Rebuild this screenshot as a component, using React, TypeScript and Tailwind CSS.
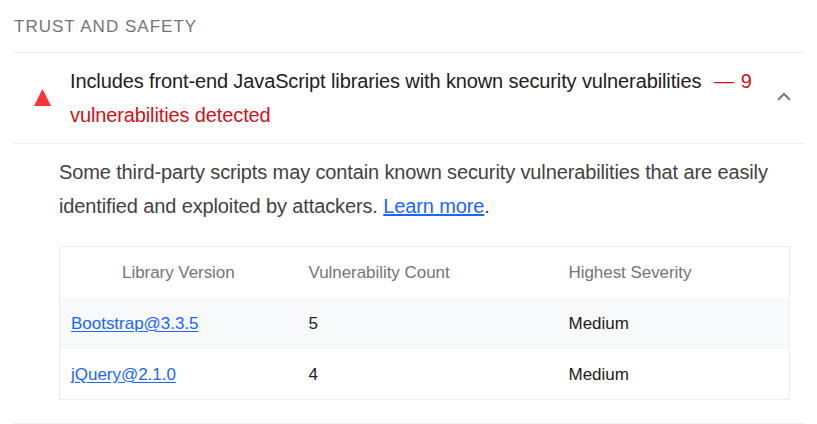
export default function App() {
  const rows = [
    ["Bootstrap@3.3.5", "5", "Medium"],
    ["jQuery@2.1.0", "4", "Medium"],
  ];
  return (
    <main className="h-[424px] w-[817px] overflow-hidden bg-white px-[13px] font-['Liberation_Sans',Arial,sans-serif] text-[#212121]">
      <h2 className="h-[52px] pl-px pt-[15px] text-[17px] leading-6 tracking-[1.02px] text-[#757575]">TRUST AND SAFETY</h2>
      <section className="h-[372px] border-y border-[#ebebeb]">
        <header className="flex h-[91px] items-center border-b border-[#ebebeb]">
          <svg className="mb-0.5 ml-[21px] h-[17px] w-[17px] shrink-0" viewBox="0 0 17 17"><path d="M8.5 0 17 17H0Z" fill="#f33" /></svg>
          <div className="ml-[19px] w-[694px] shrink-0 text-[20px] leading-[34px] tracking-[-0.12px]">
            <div className="flex whitespace-nowrap"><span className="w-[644px] shrink-0">Includes front-end JavaScript libraries with known security vulnerabilities</span><span className="text-[#d01217] [word-spacing:1.5px]">— 9</span></div>
            <div className="text-[#d01217]">vulnerabilities detected</div>
          </div>
          <svg className="mb-1 ml-[13px] h-[9px] w-[14px] shrink-0" viewBox="0 0 14 9"><path d="m1.2 7.7 5.8-5.8 5.8 5.8" fill="none" stroke="#757575" strokeWidth="2" /></svg>
        </header>
        <div className="pl-[46px] pt-[11px]">
          <div className="whitespace-nowrap text-[20px] leading-[34px] tracking-[-0.125px] text-[#424242]">
            <p>Some third-party scripts may contain known security vulnerabilities that are easily</p>
            <p>identified and exploited by attackers. <a className="text-[#1a66ff] underline">Learn more</a>.</p>
          </div>
          <div className="mt-[23px] h-[154px] w-[731px] border border-[#ebebeb] text-[17px] tracking-[-0.02px]">
            <div className="grid h-[51px] grid-cols-[248.5px_260px_1fr] items-center pt-px tracking-[-0.05px] text-[#757575]"><span className="pl-[62px]">Library Version</span><span>Vulnerability Count</span><span>Highest Severity</span></div>
            {rows.map((row, i) => <div key={row[0]} className={`grid grid-cols-[248.5px_260px_1fr] items-center h-[51px] ${i === 0 ? "bg-[#f8f9fb]" : ""}`}><a className="pl-[11px] text-[#1a66ff] underline underline-offset-2">{row[0]}</a><span>{row[1]}</span><span>{row[2]}</span></div>)}
          </div>
        </div>
      </section>
    </main>
  );
}
